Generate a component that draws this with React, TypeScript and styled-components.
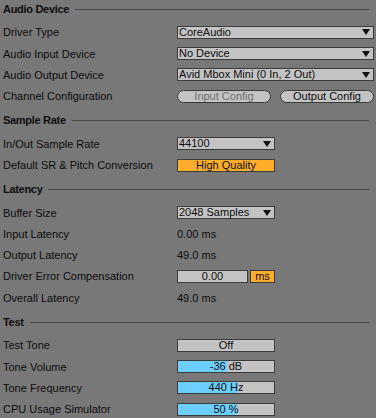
import React from 'react';
import styled, { createGlobalStyle } from 'styled-components';

const GlobalStyle = createGlobalStyle`
  html, body {
    margin: 0;
    padding: 0;
    background: #787878;
  }
  body {
    font-family: "Liberation Sans", Arial, sans-serif;
    font-size: 11px;
    color: #0d0d0d;
  }
`;

const Panel = styled.div`
  width: 376px;
  height: 418px;
  padding: 1.5px 2px 0 3px;
  box-sizing: border-box;
  overflow: hidden;
`;

const Section = styled.div`
  display: flex;
  flex-direction: column;

  & + & {
    margin-top: 6.2px;
  }
`;

const SectionHeader = styled.div`
  display: flex;
  align-items: center;
  gap: 6px;
  height: 15px;
  font-weight: bold;
  letter-spacing: -0.3px;
  margin-bottom: 5.1px;
  padding-right: 5px;

  &::after {
    content: '';
    flex: 1;
    height: 1px;
    background: #4a4a4a;
  }
`;

const Row = styled.div`
  display: flex;
  align-items: center;
  height: 21.3px;
`;

const Label = styled.div`
  width: 174px;
  flex-shrink: 0;
  white-space: nowrap;
`;

const Controls = styled.div`
  display: flex;
  align-items: center;
  gap: 2px;
`;

const Select = styled.div<{ $w: number }>`
  width: ${({ $w }) => $w}px;
  height: 13px;
  box-sizing: border-box;
  border: 1px solid #3c3c3c;
  background: #c3c3c3;
  display: flex;
  align-items: center;
  justify-content: space-between;
  padding: 0 3px 0 1px;
  line-height: 1;
`;

const Arrow = styled.span`
  width: 0;
  height: 0;
  border-left: 4px solid transparent;
  border-right: 4px solid transparent;
  border-top: 6px solid #111;
`;

const PillButton = styled.div<{ $disabled?: boolean }>`
  width: 94px;
  height: 13px;
  box-sizing: border-box;
  border: 1px solid #3c3c3c;
  border-radius: 7px;
  background: #c3c3c3;
  color: ${({ $disabled }) => ($disabled ? '#707070' : '#0d0d0d')};
  display: flex;
  align-items: center;
  justify-content: center;
  line-height: 1;
`;

const ButtonPair = styled.div`
  display: flex;
  gap: 9px;
`;

const Field = styled.div<{ $w: number; $bg?: string }>`
  width: ${({ $w }) => $w}px;
  height: 13px;
  box-sizing: border-box;
  border: 1px solid #3c3c3c;
  background: ${({ $bg }) => $bg || '#c3c3c3'};
  display: flex;
  align-items: center;
  justify-content: center;
  line-height: 1;
  position: relative;
  overflow: hidden;
`;

const Fill = styled.div`
  position: absolute;
  left: 0;
  top: 0;
  bottom: 0;
  background: #6dcfff;
`;

const FieldText = styled.span`
  position: relative;
`;

const Value = styled.div`
  padding-left: 0;
`;

const Select2 = ({ w, text }: { w: number; text: string }) => (
  <Select $w={w}>
    <span>{text}</span>
    <Arrow />
  </Select>
);

const Slider = ({ text, pct }: { text: string; pct: number }) => (
  <Field $w={98}>
    <Fill style={{ width: `${pct}%` }} />
    <FieldText>{text}</FieldText>
  </Field>
);

const App: React.FC = () => {
  return (
    <>
      <GlobalStyle />
      <Panel>
        <Section>
          <SectionHeader>Audio Device</SectionHeader>
          <Row>
            <Label>Driver Type</Label>
            <Select2 w={197} text="CoreAudio" />
          </Row>
          <Row>
            <Label>Audio Input Device</Label>
            <Select2 w={197} text="No Device" />
          </Row>
          <Row>
            <Label>Audio Output Device</Label>
            <Select2 w={197} text="Avid Mbox Mini (0 In, 2 Out)" />
          </Row>
          <Row>
            <Label>Channel Configuration</Label>
            <ButtonPair>
              <PillButton $disabled>Input Config</PillButton>
              <PillButton>Output Config</PillButton>
            </ButtonPair>
          </Row>
        </Section>

        <Section>
          <SectionHeader>Sample Rate</SectionHeader>
          <Row>
            <Label>In/Out Sample Rate</Label>
            <Select2 w={98} text="44100" />
          </Row>
          <Row>
            <Label>Default SR &amp; Pitch Conversion</Label>
            <Field $w={98} $bg="#ffad2b">High Quality</Field>
          </Row>
        </Section>

        <Section>
          <SectionHeader>Latency</SectionHeader>
          <Row>
            <Label>Buffer Size</Label>
            <Select2 w={98} text="2048 Samples" />
          </Row>
          <Row>
            <Label>Input Latency</Label>
            <Value>0.00 ms</Value>
          </Row>
          <Row>
            <Label>Output Latency</Label>
            <Value>49.0 ms</Value>
          </Row>
          <Row>
            <Label>Driver Error Compensation</Label>
            <Controls>
              <Field $w={71}>0.00</Field>
              <Field $w={25} $bg="#ffad2b">ms</Field>
            </Controls>
          </Row>
          <Row>
            <Label>Overall Latency</Label>
            <Value>49.0 ms</Value>
          </Row>
        </Section>

        <Section>
          <SectionHeader>Test</SectionHeader>
          <Row>
            <Label>Test Tone</Label>
            <Field $w={98}>Off</Field>
          </Row>
          <Row>
            <Label>Tone Volume</Label>
            <Slider text="-36 dB" pct={51} />
          </Row>
          <Row>
            <Label>Tone Frequency</Label>
            <Slider text="440 Hz" pct={62} />
          </Row>
          <Row>
            <Label>CPU Usage Simulator</Label>
            <Slider text="50 %" pct={61} />
          </Row>
        </Section>
      </Panel>
    </>
  );
};

export default App;
